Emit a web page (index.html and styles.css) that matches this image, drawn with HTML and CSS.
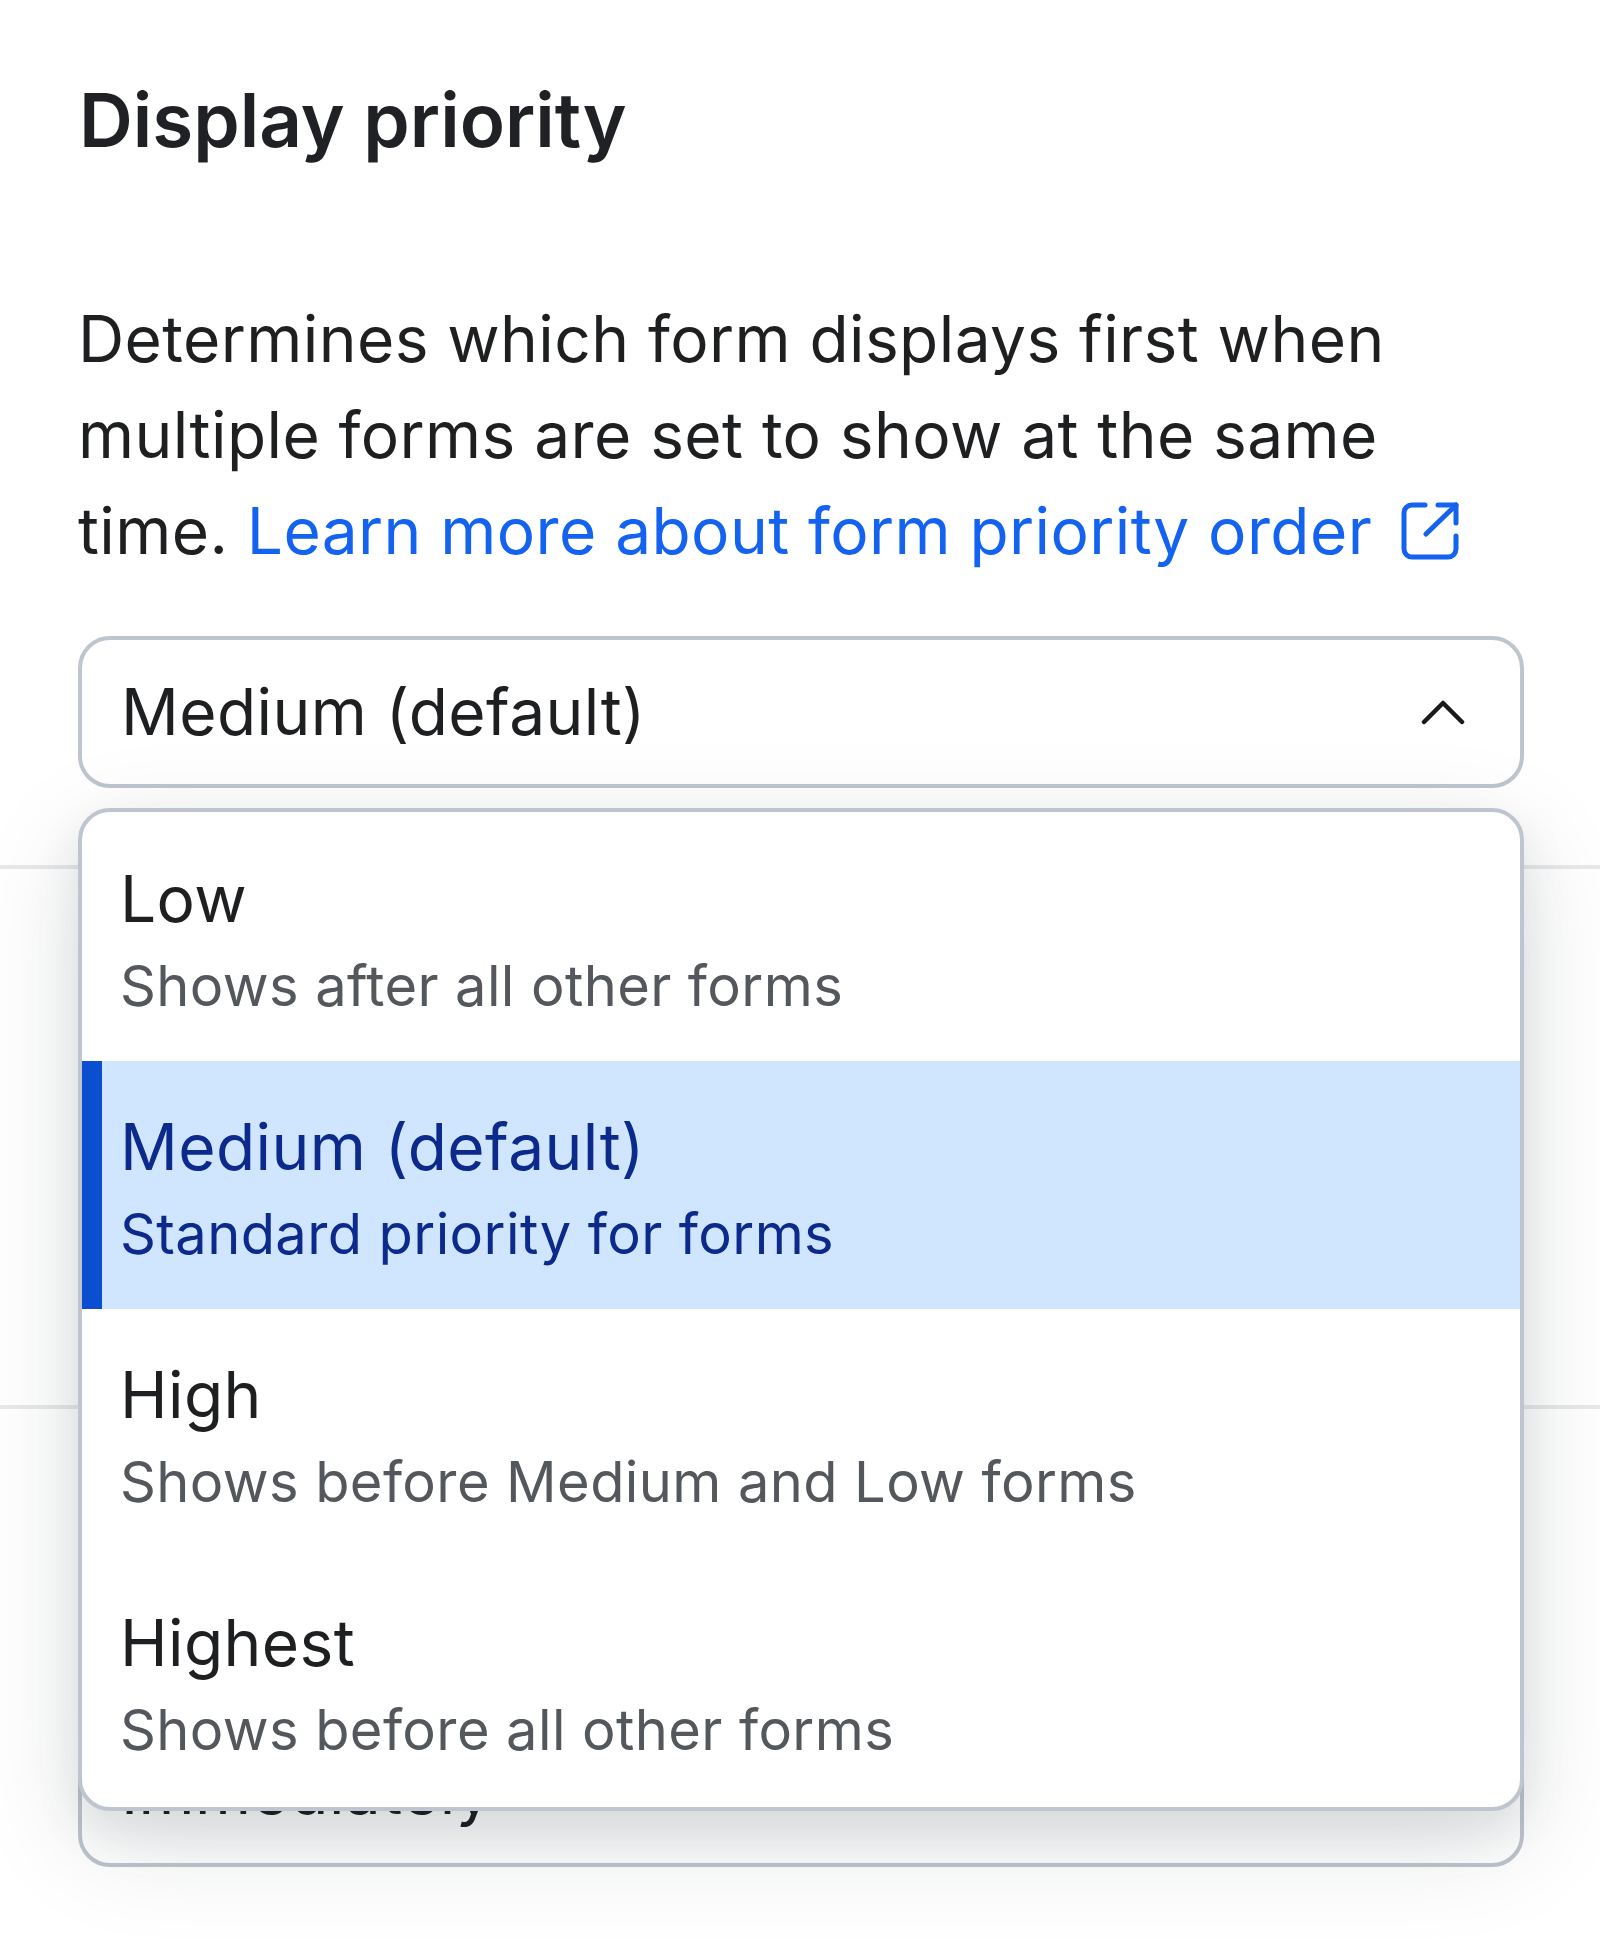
FILE: index.html
```html
<!doctype html>
<html lang="en">
<head>
  <meta charset="UTF-8">
  <title>Display priority</title>
  <link rel="stylesheet" href="styles.css">
</head>
<body>
  <div class="section first">
    <h2 class="title">Display priority</h2>
    <p class="desc">
      Determines which form displays first when multiple forms are set to show at the same time.
      <a class="link" href="#">Learn more about form priority order<svg class="ext" viewBox="0 0 58 58" fill="none" stroke="currentColor" stroke-width="5" stroke-linecap="round" stroke-linejoin="round"><path d="M24 3H11a8 8 0 0 0-8 8v36a8 8 0 0 0 8 8h36a8 8 0 0 0 8-8V34"/><path d="M25 32 55 3"/><path d="M37 3h18v18"/></svg></a>
    </p>
    <div class="picker">
      <div class="field">
        <span>Medium (default)</span>
        <svg class="chevron" viewBox="0 0 44 26" fill="none" stroke="currentColor" stroke-width="4.5" stroke-linecap="round" stroke-linejoin="round"><path d="M3 23 22 4l19 19"/></svg>
      </div>
      <ul class="menu">
        <li class="option">
          <div class="opt-name">Low</div>
          <div class="opt-hint">Shows after all other forms</div>
        </li>
        <li class="option selected">
          <div class="opt-name">Medium (default)</div>
          <div class="opt-hint">Standard priority for forms</div>
        </li>
        <li class="option">
          <div class="opt-name">High</div>
          <div class="opt-hint">Shows before Medium and Low forms</div>
        </li>
        <li class="option">
          <div class="opt-name">Highest</div>
          <div class="opt-hint">Shows before all other forms</div>
        </li>
      </ul>
    </div>
  </div>
  <div class="section middle"></div>
  <div class="section last">
    <div class="field">
      <span>Immediately</span>
    </div>
  </div>
</body>
</html>
```

FILE: styles.css
```css
* {
  box-sizing: border-box;
}
body {
  margin: 0;
  background-color: #fff;
  color: #1d1f21;
  font-family: Inter, "Liberation Sans", sans-serif;
  font-size: 64px;
  line-height: 96px;
  letter-spacing: 0.42px;
}
.section {
  padding: 0 76px 0 78px;
  border-bottom: 4px solid #e8e9eb;
}
.first {
  height: 869px;
  padding-top: 72px;
}
.middle {
  height: 540px;
}
.last {
  border-bottom: none;
  padding-top: 306px;
  padding-bottom: 72px;
}
.title {
  margin: 0 0 123px 1px;
  font-size: 74.5px;
  line-height: 96px;
  font-weight: 600;
  letter-spacing: 0;
  color: #1f2124;
}
.desc {
  margin: 0 0 57px;
}
.link {
  color: #1463f0;
  text-decoration: none;
}
.ext {
  display: inline-block;
  width: 58px;
  height: 58px;
  margin-left: 29px;
  vertical-align: -6px;
}
.picker {
  position: relative;
}
.field {
  display: flex;
  align-items: center;
  justify-content: space-between;
  height: 152px;
  padding: 0 55px 0 39px;
  border: 4px solid #bfc5ce;
  border-radius: 32px;
  background-color: #fff;
}
.chevron {
  width: 44px;
  height: 26px;
  color: #1a1a1a;
}
.menu {
  position: absolute;
  top: 172px;
  left: 0;
  right: 0;
  margin: 0;
  padding: 1px 0 2px;
  list-style: none;
  background-color: #fff;
  border: 4px solid #bfc5ce;
  border-radius: 32px;
  overflow: hidden;
  box-shadow: 0 20px 48px rgba(20, 30, 40, 0.09), 0 32px 110px rgba(20, 30, 40, 0.12);
}
.option {
  height: 248px;
  padding: 38px 38px 36px;
}
.opt-name {
  font-size: 64px;
  line-height: 96px;
}
.opt-hint {
  font-size: 56px;
  line-height: 78px;
  letter-spacing: 0.4px;
  color: #54585c;
}
.selected {
  background-color: #d0e6fe;
  border-left: 20px solid #0b4fd0;
  padding-left: 18px;
}
.selected .opt-name,
.selected .opt-hint {
  color: #0c2a8c;
}
```
